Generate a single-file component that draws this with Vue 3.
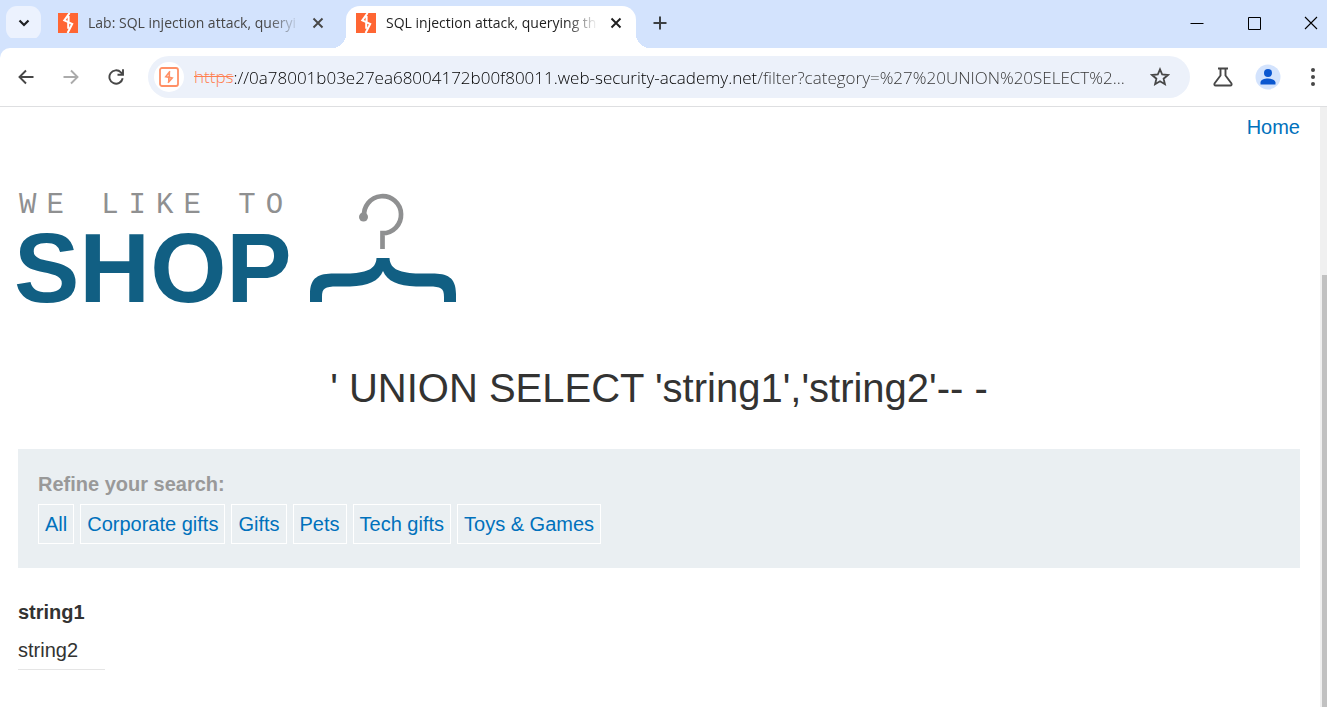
<script setup>
import { ref } from 'vue'

const tabs = [
  { title: 'Lab: SQL injection attack, queryi', active: false },
  { title: 'SQL injection attack, querying th', active: true },
]
const address = ref('://0a78001b03e27ea68004172b00f80011.web-security-academy.net/filter?category=%27%20UNION%20SELECT%2...')
const categories = ['All', 'Corporate gifts', 'Gifts', 'Pets', 'Tech gifts', 'Toys & Games']
const rows = ['string1', 'string2']
</script>

<template>
  <div class="browser">
    <header class="tab-strip">
      <button class="tab-search" aria-label="Search tabs">
        <svg width="12" height="8" viewBox="0 0 12 8"><path d="M1.500 1.500 6 6l4.500-4.500" fill="none" stroke="#1f2023" stroke-width="2.200" /></svg>
      </button>
      <div v-for="tab in tabs" :key="tab.title" class="tab" :class="{ active: tab.active }">
        <svg class="favicon" width="20" height="20" viewBox="0 0 20 20">
          <path d="M0 0h20v20H0z" fill="#ff6633" />
          <path d="M11.600 0 6.300 7.400l3.900 1.800 4 1.800-4.600 9M10.600 3v6.200M10.200 9.800v6" fill="none" stroke="#fff" stroke-width="2" />
        </svg>
        <span class="tab-title">{{ tab.title }}</span>
        <button class="tab-close" aria-label="Close tab">
          <svg width="12" height="12" viewBox="0 0 12 12"><path d="m1.500 1.500 9 9m0-9-9 9" fill="none" stroke="currentColor" stroke-width="1.900" /></svg>
        </button>
      </div>
      <button class="new-tab" aria-label="New tab">
        <svg width="14" height="14" viewBox="0 0 14 14"><path d="M7 .5v13M.5 7h13" stroke="#3c4043" stroke-width="2" /></svg>
      </button>
      <div class="window-controls">
        <button aria-label="Minimize"><svg width="14" height="14" viewBox="0 0 14 14"><path d="M.5 7.500h13" stroke="#000" /></svg></button>
        <button aria-label="Maximize"><svg width="14" height="14" viewBox="0 0 14 14"><path d="M1.500 1.500h12v12h-12z" fill="none" stroke="#000" /></svg></button>
        <button aria-label="Close"><svg width="14" height="14" viewBox="0 0 14 14"><path d="m1 1 12 12M13 1 1 13" stroke="#000" stroke-width="1.100" /></svg></button>
      </div>
    </header>

    <nav class="toolbar">
      <button class="nav-button" aria-label="Back">
        <svg width="16" height="16" viewBox="0 0 16 16"><path d="M15.500 8H2M8 1.500 1.500 8 8 14.500" fill="none" stroke="#474747" stroke-width="1.900" /></svg>
      </button>
      <button class="nav-button" aria-label="Forward">
        <svg width="16" height="16" viewBox="0 0 16 16"><path d="M.5 8H14M8 1.500 14.500 8 8 14.500" fill="none" stroke="#ababab" stroke-width="1.900" /></svg>
      </button>
      <button class="nav-button" aria-label="Reload">
        <svg width="16" height="16" viewBox="0 0 16 16"><path d="M14.700 9.300A6.700 6.700 0 1 1 12.900 3.300L15 5.600M15 .3v5.500H9.500" fill="none" stroke="#474747" stroke-width="1.900" /></svg>
      </button>
      <form class="address-bar" @submit.prevent>
        <button type="button" class="site-info" aria-label="Site information">
          <svg width="20" height="20" viewBox="0 0 20 20">
            <rect x="1" y="1" width="18" height="18" rx="2" fill="none" stroke="#ff9066" stroke-width="1.800" />
            <path d="M11 4.200 6.800 9.600l6.400 1.300L9 15.800M10.300 5.500V10M9.800 10.500v4" fill="none" stroke="#ff9066" stroke-width="1.600" />
          </svg>
        </button>
        <label class="scheme" for="address">https</label>
        <input id="address" v-model="address" type="text" spellcheck="false" />
        <button type="button" class="star" aria-label="Bookmark this page">
          <svg width="20" height="20" viewBox="0 0 20 20"><path d="m10 2.300 2.200 5.200 5.700.5-4.300 3.700 1.300 5.500-4.900-3-4.900 3 1.300-5.500L2.100 8l5.700-.5z" fill="none" stroke="#474747" stroke-width="1.800" /></svg>
        </button>
      </form>
      <div class="actions">
        <button aria-label="Labs">
          <svg width="20" height="20" viewBox="0 0 20 20"><path d="M5 1.500h10M7.500 1.500v7L1.700 16.300c-.8 1.200-.2 2.200 1 2.200h14.600c1.200 0 1.800-1 1-2.200L12.500 8.500v-7" fill="none" stroke="#474747" stroke-width="1.900" /></svg>
        </button>
        <button aria-label="Profile">
          <svg width="26" height="26" viewBox="0 0 26 26"><circle cx="13" cy="13" r="12.500" fill="#d3e3fd" /><circle cx="13" cy="9" r="4" fill="#0b57d0" /><path d="M5.500 20.500v-2c0-5.300 15-5.300 15 0v2z" fill="#0b57d0" /></svg>
        </button>
        <button aria-label="Menu">
          <svg width="4" height="18" viewBox="0 0 4 18"><g fill="#474747"><circle cx="2" cy="2" r="2" /><circle cx="2" cy="9" r="2" /><circle cx="2" cy="16" r="2" /></g></svg>
        </button>
      </div>
    </nav>

    <div class="viewport">
      <main class="page">
        <div class="top-links"><a href="#">Home</a></div>
        <svg class="logo" width="440" height="120" viewBox="0 0 440 120" role="img" aria-label="We like to shop">
          <text class="logo-small" x="1" y="23">WE LIKE TO</text>
          <text class="logo-big" x="-4" y="112">SHOP</text>
          <circle cx="345.500" cy="27" r="4.500" fill="#8f9091" />
          <path d="M346.200 27A18.500 18.500 0 1 1 364.500 43.200V59" fill="none" stroke="#8f9091" stroke-width="4.700" />
          <path d="M292 112V104C292 87 301 83.500 316 83.500H329C347 83 358 80 358.500 68H371.500C372 80 383 83 401 83.500H414C429 83.500 438 87 438 104V112H426V107C426 98 423 96.500 411 96.500H398C380 96 369 91 365 81C361 91 350 96 332 96.500H319C307 96.500 304 98 304 107V112Z" fill="#115f83" />
        </svg>
        <h1>' UNION SELECT 'string1','string2'-- -</h1>
        <section class="filters">
          <strong>Refine your search:</strong>
          <div class="filter-list">
            <a v-for="category in categories" :key="category" href="#">{{ category }}</a>
          </div>
        </section>
        <table>
          <tbody>
            <tr><th scope="row">{{ rows[0] }}</th></tr>
            <tr><td>{{ rows[1] }}</td></tr>
          </tbody>
        </table>
      </main>
      <div class="scroll-track"><div class="scroll-thumb"></div></div>
    </div>
  </div>
</template>

<style>
body {
  margin: 0;
}
</style>

<style scoped>
* {
  box-sizing: border-box;
}
.browser {
  display: flex;
  flex-direction: column;
  height: 100vh;
  overflow: hidden;
  background: #fff;
  font-family: "Open Sans", "Noto Sans", sans-serif;
}
svg {
  display: block;
  flex: none;
}
button {
  display: flex;
  align-items: center;
  justify-content: center;
  flex: none;
  margin: 0;
  padding: 0;
  border: 0;
  background: none;
}
.tab-strip {
  display: flex;
  align-items: flex-start;
  flex: none;
  height: 48px;
  padding-left: 6px;
  background: #d3e3fd;
}
.tab-search {
  width: 35px;
  height: 34px;
  margin: 6px 5px 0 0;
  border-radius: 11px;
  background: #ecf2fe;
}
.tab {
  position: relative;
  display: flex;
  align-items: center;
  width: 290px;
  height: 42px;
  margin-top: 6px;
  padding: 0 12px 8px 10px;
  color: #474747;
}
.tab:not(.active) {
  margin-right: 10px;
  padding: 0 10px 8px 12px;
}
.tab.active {
  border-radius: 14px 14px 0 0;
  background: #fff;
  color: #1f1f1f;
}
.tab.active::before,
.tab.active::after {
  content: "";
  position: absolute;
  bottom: 0;
  width: 14px;
  height: 14px;
}
.tab.active::before {
  right: 100%;
  background: radial-gradient(circle at 0 0, transparent 14px, #fff 14px);
}
.tab.active::after {
  left: 100%;
  background: radial-gradient(circle at 100% 0, transparent 14px, #fff 14px);
}
.tab-title {
  flex: 1;
  min-width: 0;
  margin: 0 10px;
  overflow: hidden;
  font-size: 14px;
  line-height: 20px;
  white-space: nowrap;
  mask-image: linear-gradient(to right, #000 calc(100% - 32px), transparent);
}
.tab-close {
  width: 16px;
  height: 16px;
  color: inherit;
}
.new-tab {
  width: 28px;
  height: 28px;
  margin: 9px 0 0 10px;
}
.window-controls {
  display: flex;
  gap: 43px;
  margin: 16px 9px 0 auto;
}
.toolbar {
  display: flex;
  align-items: center;
  flex: none;
  height: 59px;
  padding: 0 12px 0 10px;
  border-bottom: 1px solid #dedfe1;
  border-top-left-radius: 10px;
  background: #fff;
  box-shadow: -10px -10px 0 #d3e3fd;
}
.nav-button {
  width: 32px;
  height: 32px;
  margin-right: 13px;
}
.address-bar {
  display: flex;
  align-items: center;
  flex: 1;
  min-width: 0;
  height: 42px;
  margin-left: 3px;
  padding: 0 20px 0 6px;
  border-radius: 21px;
  background: #ecf1fa;
  font-size: 17px;
  font-weight: 300;
  line-height: 24px;
}
.site-info {
  width: 30px;
  height: 30px;
  margin-right: 10px;
  border-radius: 50%;
  background: #fff;
}
.scheme {
  color: #ff7f50;
  text-decoration: line-through;
}
#address {
  flex: 1;
  min-width: 0;
  height: 30px;
  padding: 0;
  border: 0;
  outline: 0;
  background: linear-gradient(to right, #000 523px, #333 523px);
  background-clip: text;
  color: transparent;
  font: inherit;
}
.star {
  margin-left: 8px;
}
.actions {
  display: flex;
  align-items: center;
  gap: 32px;
  margin-left: 23px;
}
.actions button:nth-child(2) {
  margin: 0 -2px 0 -10px;
}
.viewport {
  display: flex;
  flex: 1;
  min-height: 0;
}
.page {
  flex: 1;
  min-width: 0;
  padding: 8px 20px 0 18px;
  color: #333332;
  font-family: "Liberation Sans", Arial, sans-serif;
  font-size: 20px;
  line-height: 24px;
}
a {
  color: #0071bc;
  text-decoration: none;
}
.top-links {
  text-align: right;
}
.logo {
  margin-top: 51px;
  overflow: visible;
}
.logo-small {
  fill: #8f9091;
  font-family: "Liberation Mono", "Courier New", monospace;
  font-size: 29px;
  letter-spacing: 10px;
}
.logo-big {
  fill: #115f83;
  font-family: "Liberation Sans", Arial, sans-serif;
  font-size: 98px;
  font-weight: bold;
}
h1 {
  margin: 54px 0 37px;
  font-size: 40px;
  font-weight: normal;
  line-height: 48px;
  text-align: center;
}
.filters {
  padding: 23px 20px 24px;
  background: #eaeff2;
}
.filters strong {
  display: block;
  color: #999;
}
.filter-list {
  display: flex;
  flex-wrap: wrap;
  gap: 6px;
  margin-top: 8px;
}
.filter-list a {
  padding: 7px 6px;
  border: 1px solid #fff;
}
table {
  width: 87px;
  margin-top: 25px;
  border-collapse: collapse;
}
th,
td {
  padding: 7px 0;
  text-align: left;
}
td {
  border-bottom: 1px solid #e5e5e5;
}
.scroll-track {
  flex: none;
  width: 7px;
  padding: 168px 0 0 2px;
  background: #f0f0f0;
}
.scroll-thumb {
  height: 100%;
  background: #c1c1c1;
}
</style>
